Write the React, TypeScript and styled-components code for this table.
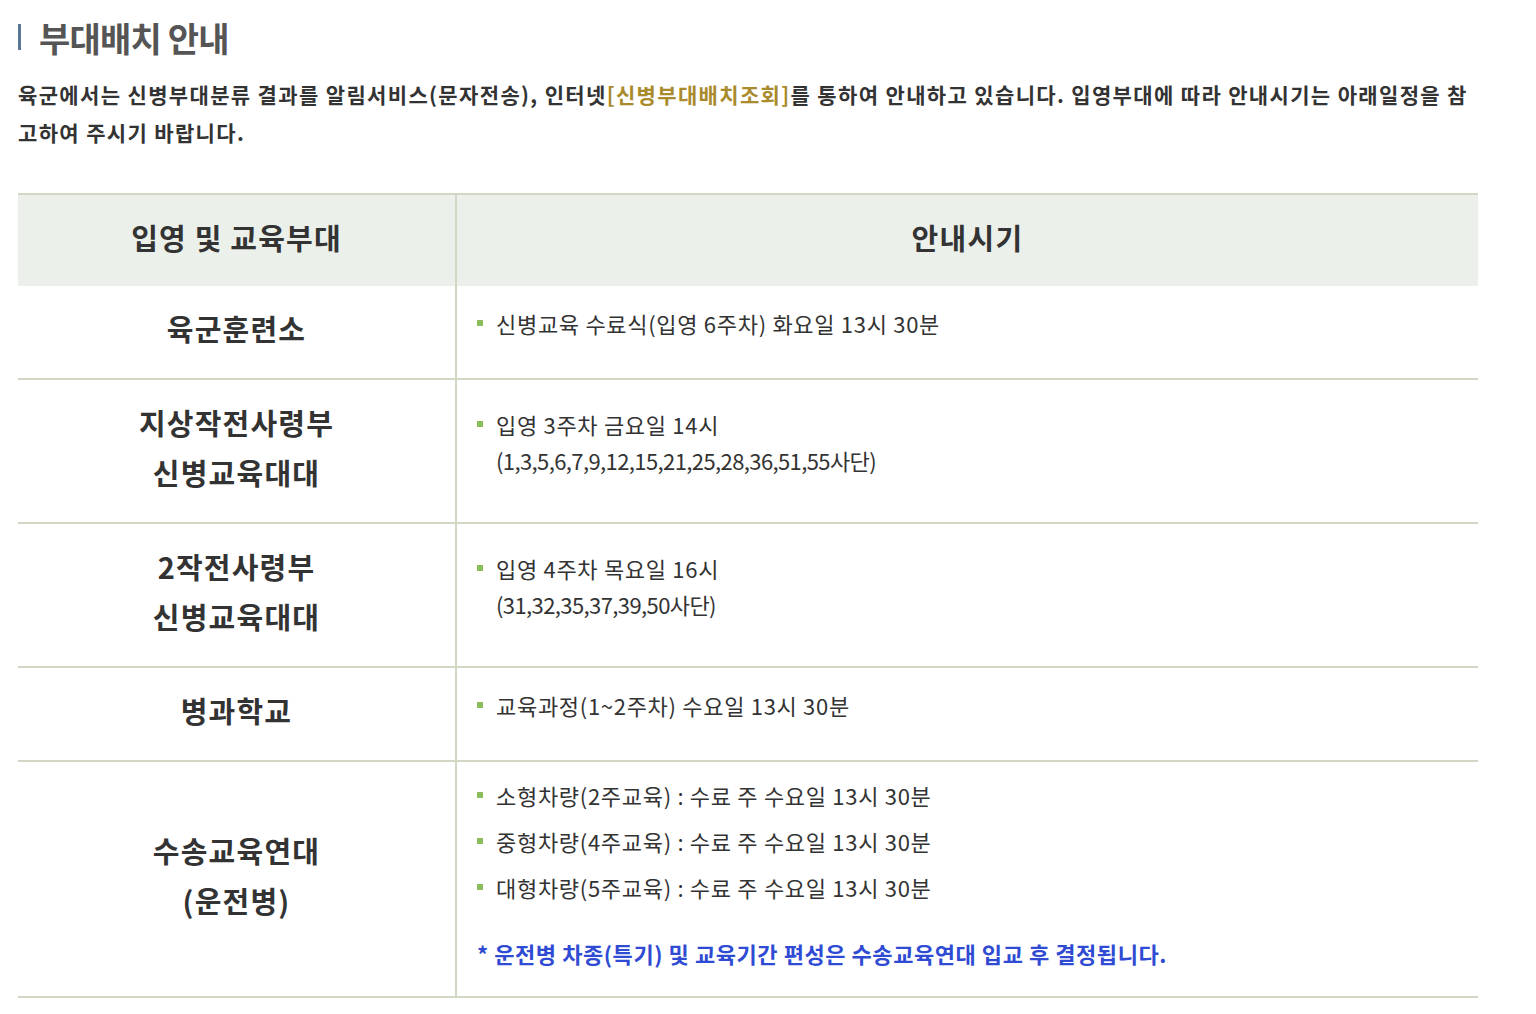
import React from "react";
import styled, { createGlobalStyle } from "styled-components";

const GlobalStyle = createGlobalStyle`
  body {
    margin: 0;
    background: #ffffff;
    font-family: "Noto Sans CJK KR", "Noto Sans", sans-serif;
    color: #333333;
  }
`;

const Page = styled.div`
  box-sizing: border-box;
  width: 1496px;
  padding: 12px 18px 0;
`;

const Title = styled.h2`
  display: flex;
  align-items: center;
  gap: 18px;
  margin: 0;
  height: 50px;
  font-size: 34px;
  font-weight: 700;
  letter-spacing: -0.8px;
  color: #555555;
  &::before {
    content: "";
    width: 3px;
    height: 26px;
    background: #5a7896;
  }
`;

const Intro = styled.p`
  margin: 13px 0 42px;
  width: 1460px;
  font-size: 21px;
  font-weight: 700;
  line-height: 38px;
  letter-spacing: 1.35px;
  color: #333333;
`;

const Link = styled.a`
  color: #a98a2c;
  text-decoration: none;
`;

const Table = styled.div`
  width: 1460px;
  border-top: 2px solid #d0d8c5;
`;

const Row = styled.div<{ $head?: boolean }>`
  display: grid;
  grid-template-columns: 439px 1fr;
  background: ${(p) => (p.$head ? "#ebf0ea" : "transparent")};
  border-bottom: ${(p) => (p.$head ? "none" : "2px solid #d0d8c5")};
`;

const LeftCell = styled.div<{ $head?: boolean }>`
  display: flex;
  flex-direction: column;
  align-items: center;
  justify-content: center;
  padding: ${(p) => (p.$head ? "17px 0 24px" : "17px 0 25px")};
  border-right: 2px solid #d0d8c5;
  font-size: 29px;
  font-weight: 700;
  line-height: 50px;
  letter-spacing: 1.2px;
  color: #333333;
  text-align: center;
`;

const HeadCell = styled.div`
  display: flex;
  align-items: center;
  justify-content: center;
  padding-bottom: 7px;
  font-size: 29px;
  font-weight: 700;
  letter-spacing: 1.3px;
  color: #333333;
`;

const RightCell = styled.div<{ $withNote?: boolean }>`
  display: flex;
  flex-direction: column;
  justify-content: center;
  gap: 10px;
  padding: ${(p) => (p.$withNote ? "15px 20px 25px" : "11px 20px 29px")};
`;

const Item = styled.div`
  display: flex;
  align-items: flex-start;
  gap: 13px;
  font-size: 22px;
  font-weight: 400;
  line-height: 36px;
  letter-spacing: 0.7px;
  color: #333333;
  &::before {
    content: "";
    flex: none;
    width: 6px;
    height: 6px;
    margin-top: 15px;
    background: #8cbd5c;
  }
`;

const Line = styled.div<{ $detail?: boolean }>`
  letter-spacing: ${(p) => (p.$detail ? "-0.6px" : "inherit")};
`;

const Note = styled.div`
  margin-top: 20px;
  font-size: 22px;
  font-weight: 700;
  line-height: 36px;
  letter-spacing: 0.55px;
  color: #2f4bd3;
`;

type Unit = {
  name: string[];
  items: string[][];
  note?: string;
};

const units: Unit[] = [
  { name: ["육군훈련소"], items: [["신병교육 수료식(입영 6주차) 화요일 13시 30분"]] },
  {
    name: ["지상작전사령부", "신병교육대대"],
    items: [["입영 3주차 금요일 14시", "(1,3,5,6,7,9,12,15,21,25,28,36,51,55사단)"]],
  },
  {
    name: ["2작전사령부", "신병교육대대"],
    items: [["입영 4주차 목요일 16시", "(31,32,35,37,39,50사단)"]],
  },
  { name: ["병과학교"], items: [["교육과정(1~2주차) 수요일 13시 30분"]] },
  {
    name: ["수송교육연대", "(운전병)"],
    items: [
      ["소형차량(2주교육) : 수료 주 수요일 13시 30분"],
      ["중형차량(4주교육) : 수료 주 수요일 13시 30분"],
      ["대형차량(5주교육) : 수료 주 수요일 13시 30분"],
    ],
    note: "* 운전병 차종(특기) 및 교육기간 편성은 수송교육연대 입교 후 결정됩니다.",
  },
];

export default function App() {
  return (
    <Page>
      <GlobalStyle />
      <Title>부대배치 안내</Title>
      <Intro>
        육군에서는 신병부대분류 결과를 알림서비스(문자전송), 인터넷
        <Link href="#">[신병부대배치조회]</Link>를 통하여 안내하고 있습니다. 입영부대에 따라
        안내시기는 아래일정을 참고하여 주시기 바랍니다.
      </Intro>
      <Table>
        <Row $head>
          <LeftCell $head>입영 및 교육부대</LeftCell>
          <HeadCell>안내시기</HeadCell>
        </Row>
        {units.map((u) => (
          <Row key={u.name.join("")}>
            <LeftCell>
              {u.name.map((n) => (
                <span key={n}>{n}</span>
              ))}
            </LeftCell>
            <RightCell $withNote={!!u.note}>
              {u.items.map((lines) => (
                <Item key={lines[0]}>
                  <div>
                    {lines.map((l, i) => (
                      <Line key={l} $detail={i > 0}>
                        {l}
                      </Line>
                    ))}
                  </div>
                </Item>
              ))}
              {u.note && <Note>{u.note}</Note>}
            </RightCell>
          </Row>
        ))}
      </Table>
    </Page>
  );
}
